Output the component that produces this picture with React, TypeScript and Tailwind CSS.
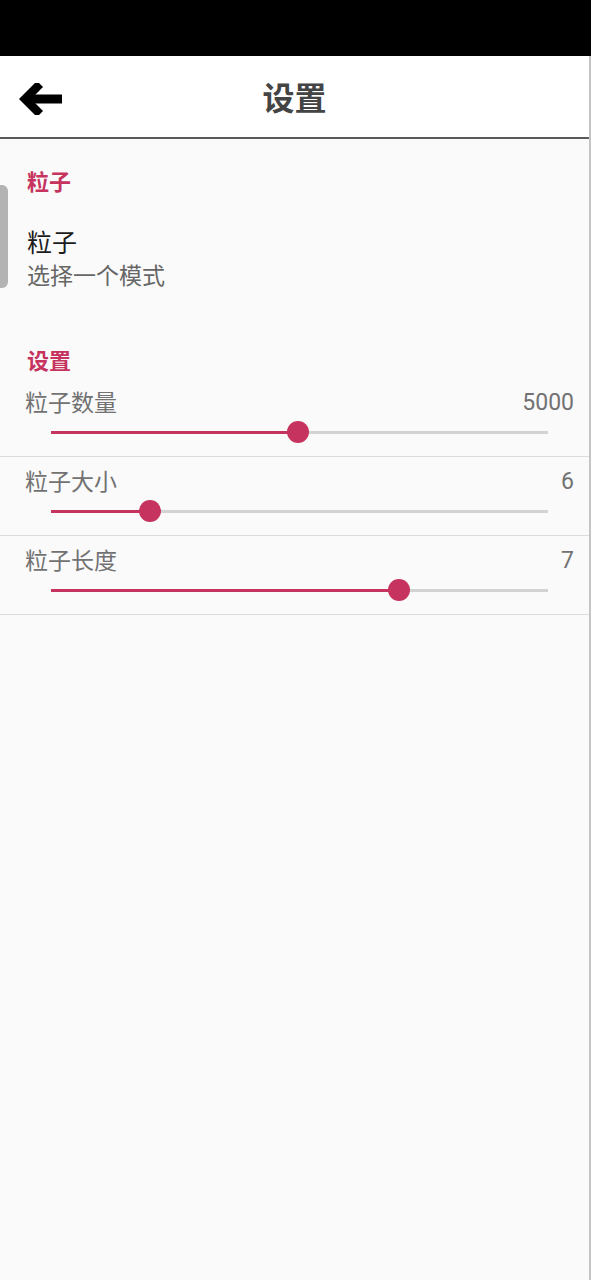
import React from "react";

function Slider({ pct }: { pct: number }) {
  return (
    <div className="relative ml-[51px] mr-[41px] h-[24px] mt-[2px]">
      <div className="absolute left-0 right-0 top-[11px] h-[3px] bg-[#d3d3d3]" />
      <div className="absolute left-0 top-[11px] h-[3px] bg-[#c6335f]" style={{ width: `${pct}%` }} />
      <div
        className="absolute top-[1px] w-[22px] h-[22px] rounded-full bg-[#c6335f] -ml-[11px]"
        style={{ left: `${pct}%` }}
      />
    </div>
  );
}

function Row({ label, value, pct }: { label: string; value: string; pct: number }) {
  return (
    <div className="pt-[10px] pb-[12px] border-b border-[#dcdcdc]">
      <div className="flex justify-between items-center h-[30px] pl-[25px] pr-[15px]">
        <span className="text-[23px] leading-[30px] mb-[4px] text-[#727272]">{label}</span>
        <span className="text-[23px] text-[#727272] font-['Roboto',sans-serif]">{value}</span>
      </div>
      <Slider pct={pct} />
    </div>
  );
}

export default function App() {
  return (
    <div className="w-[591px] h-[1280px] flex flex-col bg-[#fafafa] font-['Noto_Sans_CJK_SC','Noto_Sans',sans-serif]">
      <div className="h-[56px] bg-black shrink-0" />
      <div className="flex-1 flex flex-col border-r-2 border-[#c4c4c4]">
        <div className="h-[83px] bg-white border-b-2 border-[#5a5a5a] relative flex items-center justify-center shrink-0">
          <svg className="absolute left-[19px] top-[27px]" width="44" height="32" viewBox="0 0 44 32">
            <path d="M43 16 H8" stroke="#000" strokeWidth="9" fill="none" />
            <path d="M18 4 L6 16 L18 28" stroke="#000" strokeWidth="8.5" fill="none" strokeLinecap="square" />
          </svg>
          <span className="text-[32px] font-bold text-[#444] leading-[40px] mb-[2px]">设置</span>
        </div>
        <div className="relative flex-1">
          <div className="absolute left-0 top-[46px] w-[8px] h-[103px] bg-[#b3b3b3] rounded-r-[6px]" />
          <div className="pt-[26px] pl-[27px]">
            <div className="text-[22px] font-bold leading-[30px] text-[#c6335f]">粒子</div>
            <div className="mt-[30px] text-[25px] leading-[32px] text-[#1c1c1c]">粒子</div>
            <div className="mt-[2px] text-[23px] leading-[30px] text-[#666]">选择一个模式</div>
            <div className="mt-[55px] mb-[4px] text-[22px] font-bold leading-[30px] text-[#c6335f]">设置</div>
          </div>
          <Row label="粒子数量" value="5000" pct={49.7} />
          <Row label="粒子大小" value="6" pct={20} />
          <Row label="粒子长度" value="7" pct={70} />
        </div>
      </div>
    </div>
  );
}
